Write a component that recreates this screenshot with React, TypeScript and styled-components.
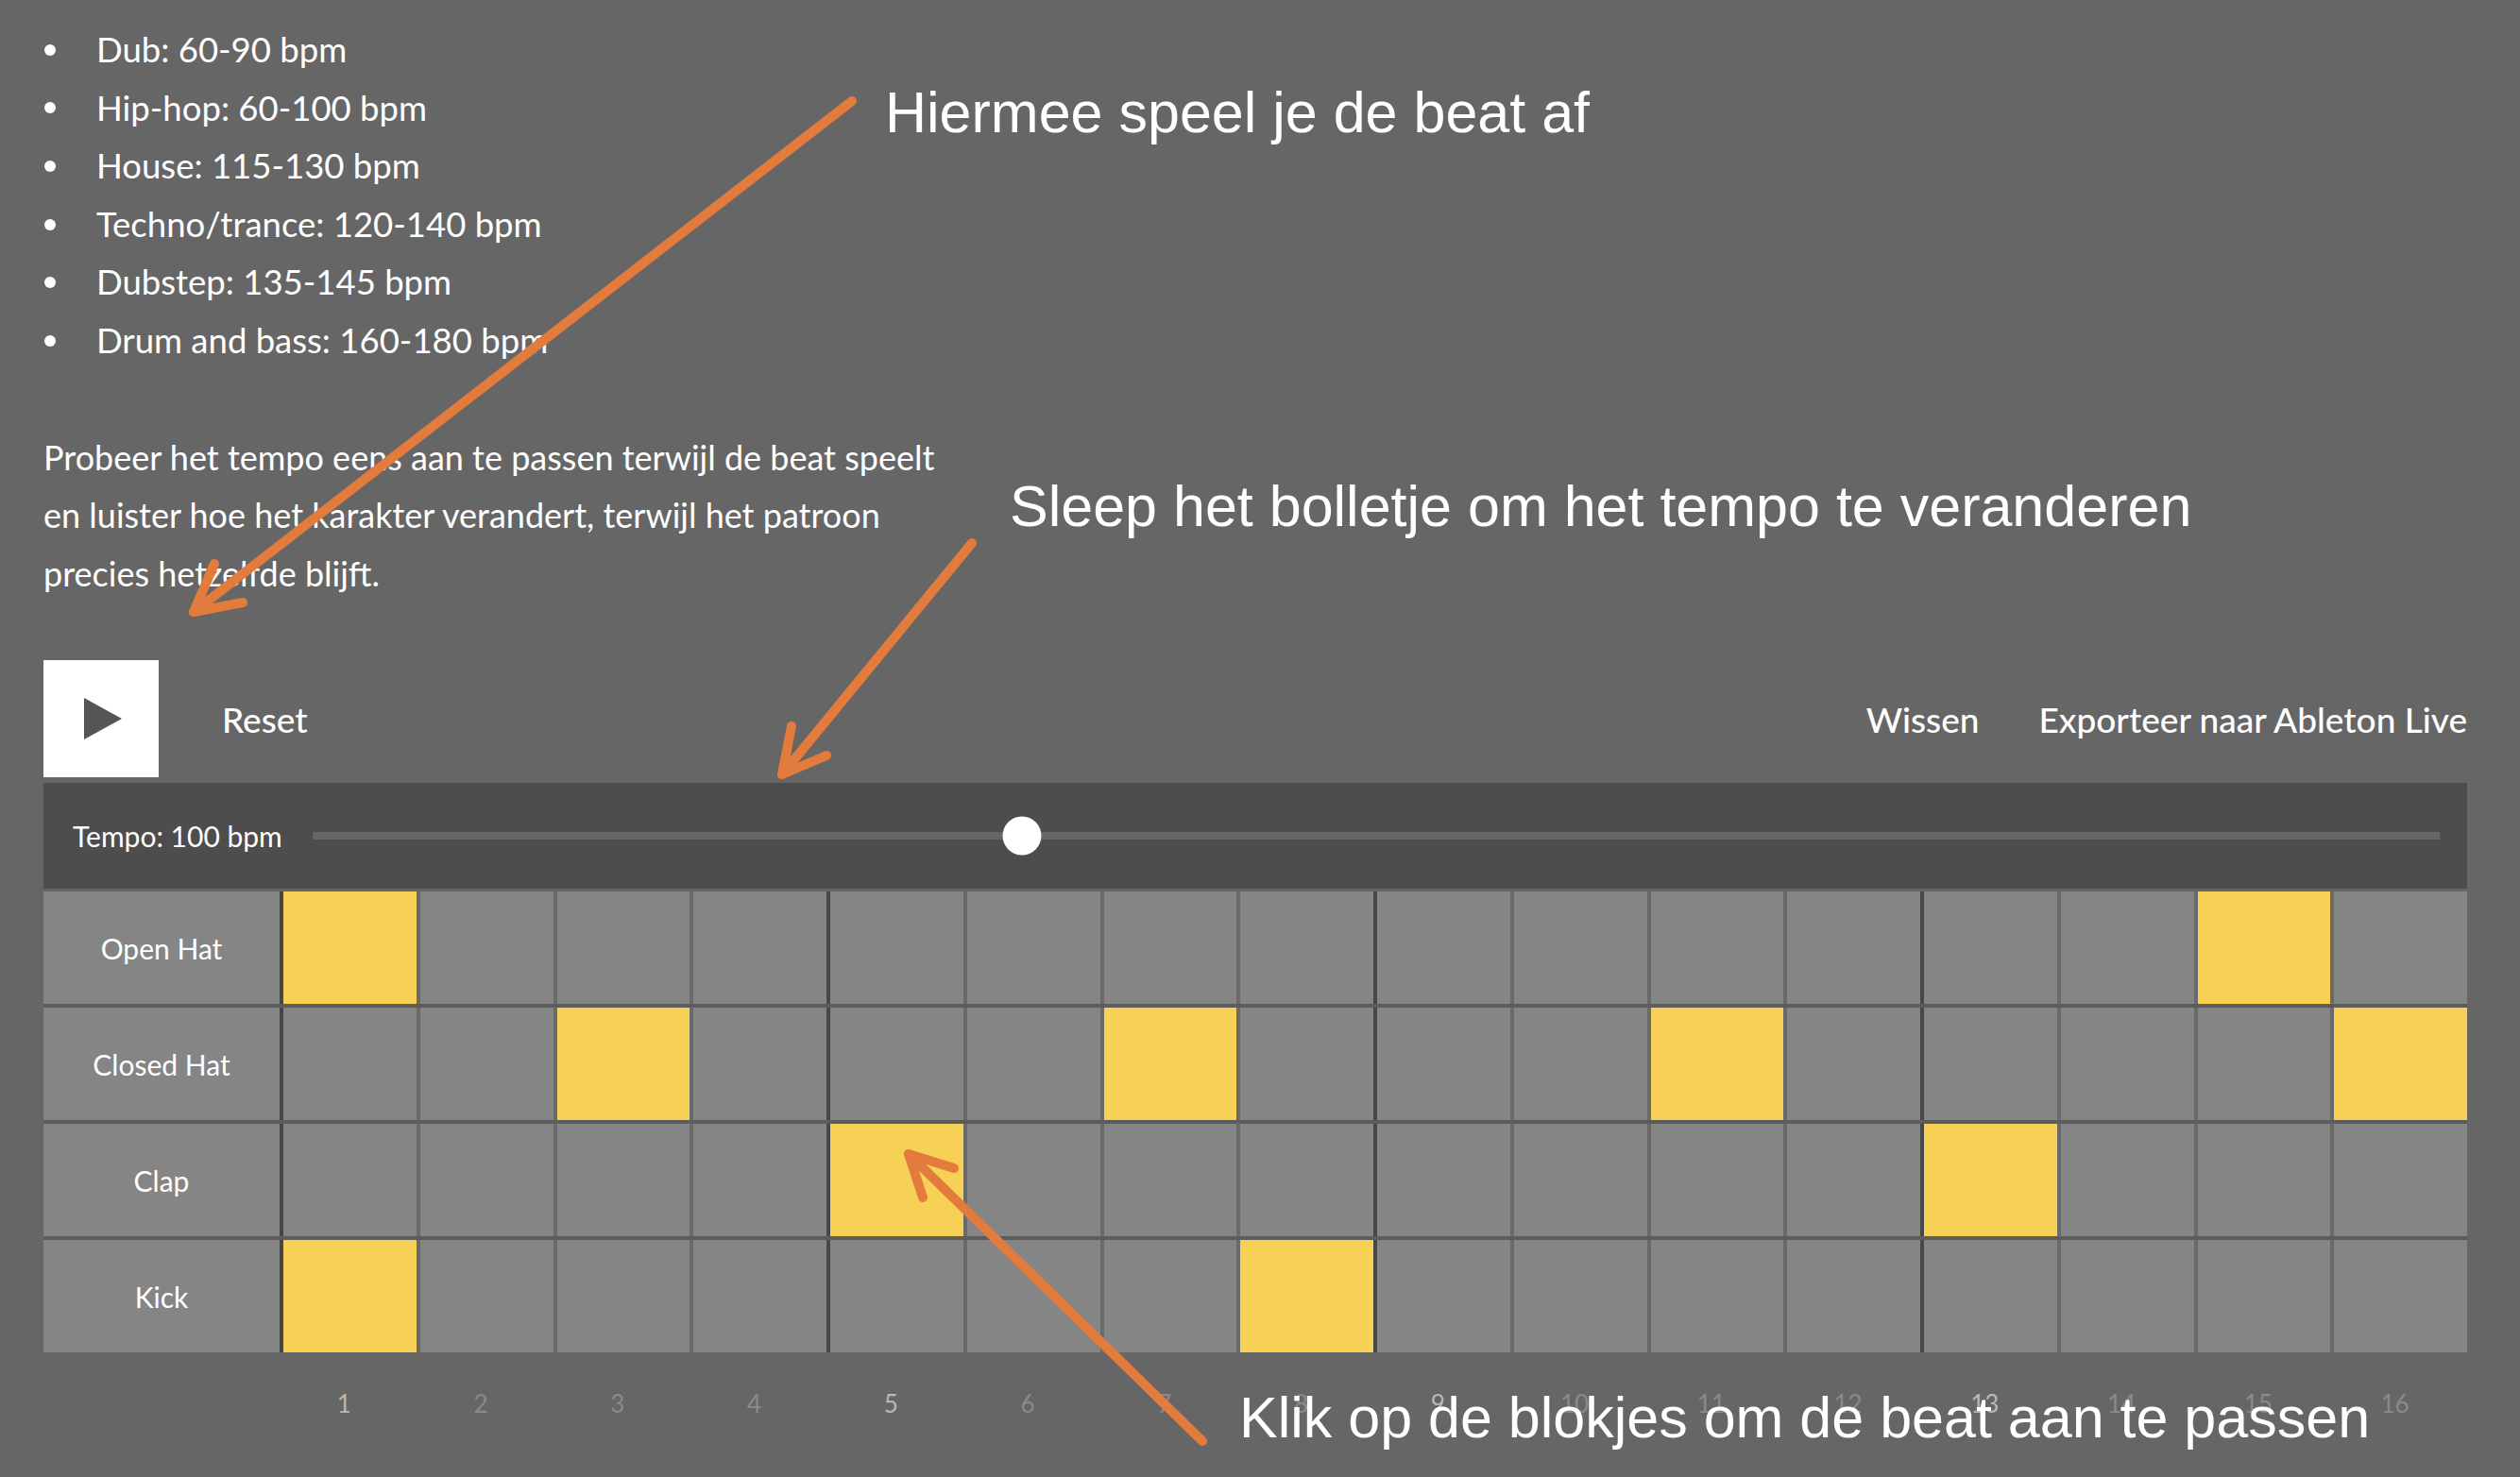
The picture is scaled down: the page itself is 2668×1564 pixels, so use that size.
import React from "react";
import styled, { createGlobalStyle } from "styled-components";

const genres = [
  "Dub: 60-90 bpm",
  "Hip-hop: 60-100 bpm",
  "House: 115-130 bpm",
  "Techno/trance: 120-140 bpm",
  "Dubstep: 135-145 bpm",
  "Drum and bass: 160-180 bpm",
];

const tracks = [
  { name: "Open Hat", steps: [1, 15] },
  { name: "Closed Hat", steps: [3, 7, 11, 16] },
  { name: "Clap", steps: [5, 13] },
  { name: "Kick", steps: [1, 8] },
];

const MIN_BPM = 60;
const MAX_BPM = 180;
const bpm = 100;

const ORANGE = "#e27b3b";

export default function App() {
  const steps = Array.from({ length: 16 }, (_, i) => i + 1);
  const pct = ((bpm - MIN_BPM) / (MAX_BPM - MIN_BPM)) * 100;

  return (
    <Page>
      <GlobalStyle />
      <GenreList>
        {genres.map((g) => (
          <li key={g}>{g}</li>
        ))}
      </GenreList>

      <Intro>
        Probeer het tempo eens aan te passen terwijl de beat speelt
        <br />
        en luister hoe het karakter verandert, terwijl het patroon
        <br />
        precies hetzelfde blijft.
      </Intro>

      <Toolbar>
        <PlayButton aria-label="Play">
          <svg width="40" height="44" viewBox="0 0 40 44">
            <polygon points="0,0 40,22 0,44" fill="#555" />
          </svg>
        </PlayButton>
        <TextButton>Reset</TextButton>
        <Spacer />
        <TextButton>Wissen</TextButton>
        <TextButton>Exporteer naar Ableton Live</TextButton>
      </Toolbar>

      <TempoBar>
        <TempoLabel>Tempo: {bpm} bpm</TempoLabel>
        <Track>
          <Thumb style={{ left: `${pct}%` }} />
        </Track>
      </TempoBar>

      <Grid>
        {tracks.map((t) => (
          <React.Fragment key={t.name}>
            <RowLabel>{t.name}</RowLabel>
            {steps.map((s) => (
              <Cell key={s} $on={t.steps.includes(s)} $beat={(s - 1) % 4 === 0} />
            ))}
          </React.Fragment>
        ))}
      </Grid>

      <Numbers>
        <span />
        {steps.map((s) => (
          <StepNumber key={s} $beat={(s - 1) % 4 === 0}>
            {s}
          </StepNumber>
        ))}
      </Numbers>

      <Arrows width="2668" height="1564" viewBox="0 0 2668 1564">
        <g stroke={ORANGE} strokeWidth="10" strokeLinecap="round" fill="none">
          <line x1="902" y1="107" x2="205" y2="648" />
          <polyline points="227,597 205,648 257,638" strokeLinejoin="round" />
          <line x1="1029" y1="575" x2="828" y2="820" />
          <polyline points="838,769 828,820 875,800" strokeLinejoin="round" />
          <line x1="1273" y1="1526" x2="962" y2="1222" />
          <polyline points="1010,1237 962,1222 977,1268" strokeLinejoin="round" />
        </g>
      </Arrows>

      <Note $x={937} $y={89}>Hiermee speel je de beat af</Note>
      <Note $x={1069} $y={506}>Sleep het bolletje om het tempo te veranderen</Note>
      <Note $x={1312} $y={1471}>Klik op de blokjes om de beat aan te passen</Note>
    </Page>
  );
}

const GlobalStyle = createGlobalStyle`
  html, body {
    margin: 0;
    background: #666666;
  }
  body {
    font-family: Lato, "Noto Sans", sans-serif;
    color: #ffffff;
  }
`;

const Page = styled.div`
  position: relative;
  box-sizing: border-box;
  width: 2668px;
  min-height: 1564px;
  padding: 22px 56px 0 46px;
  overflow: hidden;
`;

const GenreList = styled.ul`
  margin: 0;
  padding: 0;
  list-style: none;
  font-size: 36.5px;
  line-height: 61.6px;

  li {
    display: flex;
    align-items: center;
  }

  li::before {
    content: "";
    width: 12px;
    height: 12px;
    border-radius: 50%;
    background: #fff;
    margin: 0 43px 0 1px;
  }
`;

const Intro = styled.p`
  margin: 62px 0 0;
  font-size: 36px;
  line-height: 61.6px;
`;

const Toolbar = styled.div`
  display: flex;
  align-items: center;
  gap: 63px;
  margin-top: 61px;
  height: 124px;
`;

const PlayButton = styled.div`
  width: 122px;
  height: 124px;
  background: #fff;
  display: flex;
  align-items: center;
  justify-content: center;
  padding-left: 4px;
  box-sizing: border-box;
  margin-right: 4px;
`;

const TextButton = styled.span`
  font-size: 37px;
  font-weight: 500;
  color: #fff;
  cursor: pointer;
`;

const Spacer = styled.div`
  flex: 1;
`;

const TempoBar = styled.div`
  display: flex;
  align-items: center;
  margin-top: 6px;
  height: 112px;
  padding: 0 29px 0 31px;
  background: #4d4d4d;
`;

const TempoLabel = styled.span`
  font-size: 30px;
  margin-right: 32px;
  white-space: nowrap;
`;

const Track = styled.div`
  position: relative;
  flex: 1;
  height: 8px;
  background: #666;
`;

const Thumb = styled.div`
  position: absolute;
  top: 50%;
  width: 41px;
  height: 41px;
  border-radius: 50%;
  background: #fff;
  transform: translate(-50%, -50%);
`;

const Grid = styled.div`
  display: grid;
  grid-template-columns: 250px repeat(16, 1fr);
  grid-auto-rows: 119px;
  gap: 4px;
  margin-top: 3px;
  background: #5c5c5c;
`;

const RowLabel = styled.div`
  display: flex;
  align-items: center;
  justify-content: center;
  background: #858585;
  font-size: 30px;
`;

const Cell = styled.div<{ $on: boolean; $beat: boolean }>`
  background: ${(p) => (p.$on ? "#f6d155" : "#858585")};
  box-shadow: -4px 0 0 ${(p) => (p.$beat ? "#474747" : "#6a6a6a")};
  cursor: pointer;
`;

const Numbers = styled.div`
  display: grid;
  grid-template-columns: 250px repeat(16, 1fr);
  gap: 4px;
  margin-top: 40px;
`;

const StepNumber = styled.span<{ $beat: boolean }>`
  text-align: center;
  padding-right: 12px;
  font-size: 26px;
  line-height: 28px;
  color: ${(p) => (p.$beat ? "#b8b8b8" : "#8a8a8a")};
`;

const Arrows = styled.svg`
  position: absolute;
  left: 0;
  top: 0;
  pointer-events: none;
`;

const Note = styled.div<{ $x: number; $y: number }>`
  position: absolute;
  left: ${(p) => p.$x}px;
  top: ${(p) => p.$y}px;
  font-family: "Liberation Sans", Arial, sans-serif;
  font-size: 61px;
  line-height: 61px;
  color: #fff;
  white-space: nowrap;
`;
